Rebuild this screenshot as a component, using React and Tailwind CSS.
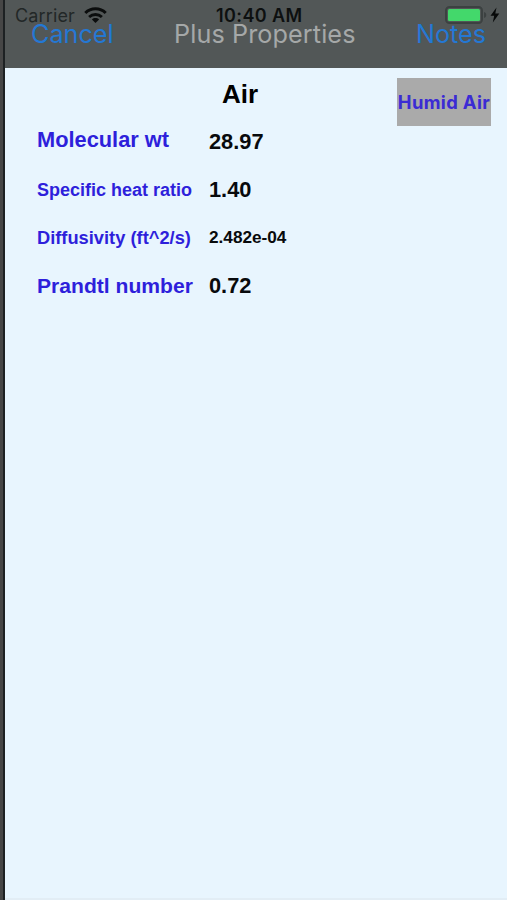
import React from "react";

const rows = [
  {
    label: "Molecular wt",
    value: "28.97",
    rowClass: "h-[50px]",
    labelClass: "text-[21.8px] -mt-[5px]",
    valueClass: "text-[21.8px] -mt-px",
  },
  {
    label: "Specific heat ratio",
    value: "1.40",
    rowClass: "h-[46px]",
    labelClass: "text-[18px] -mt-[2px]",
    valueClass: "text-[21.8px] -mt-px",
  },
  {
    label: "Diffusivity (ft^2/s)",
    value: "2.482e-04",
    rowClass: "h-[48px]",
    labelClass: "text-[18.3px]",
    valueClass: "text-[17.2px]",
  },
  {
    label: "Prandtl number",
    value: "0.72",
    rowClass: "h-[48px]",
    labelClass: "text-[21.1px]",
    valueClass: "text-[21.8px]",
  },
];

function WifiIcon() {
  return (
    <svg width="23" height="17" viewBox="0 0 23 17" fill="none" stroke="#0b0d0d">
      <path d="M1.3 6C7 0.4 16 0.4 21.7 6" strokeWidth="3.1" />
      <path d="M5.1 10C8.8 6.6 14.2 6.6 17.9 10" strokeWidth="2.9" />
      <path d="M11.5 16L7.9 12.4C9.9 10.6 13.1 10.6 15.1 12.4Z" fill="#0b0d0d" stroke="none" />
    </svg>
  );
}

function BatteryIcon() {
  return (
    <svg width="55" height="18" viewBox="0 0 55 18">
      <rect x="1" y="1" width="36" height="16" rx="3.5" fill="#525757" stroke="#3c4141" strokeWidth="2" />
      <rect x="3" y="3" width="32" height="12" rx="1.5" fill="#43d86b" />
      <path d="M39 6C42 6.5 42 11.5 39 12Z" fill="#3c4141" />
      <path d="M51.5 1.5L45.5 9.8H49.2L47.8 16.5L54.3 7.6H50.3Z" fill="#070909" />
    </svg>
  );
}

function StatusBar() {
  return (
    <div className="absolute inset-x-0 top-0 h-[30px] text-[18px] leading-[31px] text-[#0d1010]">
      <div className="absolute left-[10px] top-0 flex items-center gap-[9px] text-[#222727]">
        <span className="w-[60px] whitespace-nowrap tracking-[0.15px]">Carrier</span>
        <WifiIcon />
      </div>
      <div className="absolute left-[211px] top-0 whitespace-nowrap font-semibold tracking-[0.4px]">
        10:40 AM
      </div>
      <div className="absolute left-[440px] top-[6px]">
        <BatteryIcon />
      </div>
    </div>
  );
}

function NavBar() {
  return (
    <header className="relative h-[68px] bg-[#525757] font-['Inter',sans-serif]">
      <div className="flex h-[68px] items-center justify-between pl-[26px] pr-[21px] pt-[2px] text-[25.2px] leading-none">
        <button className="whitespace-nowrap text-[#2478d4]">Cancel</button>
        <span className="whitespace-nowrap tracking-[0.1px] text-[#a5a8a8]">Plus Properties</span>
        <button className="whitespace-nowrap text-[#2478d4]">Notes</button>
      </div>
      <StatusBar />
    </header>
  );
}

export default function App() {
  return (
    <div className="flex h-[900px] w-[507px] overflow-hidden bg-[#e8f5fe] font-['Liberation_Sans',Arial,sans-serif]">
      <div className="h-full w-[5px] shrink-0 border-r-2 border-[#1d2123] bg-[#464646]"></div>

      <div className="flex min-w-0 flex-1 flex-col">
        <NavBar />

        <main className="flex-1 border-b-2 border-[#e2edf5]">
          <div className="grid h-[50px] grid-cols-[217px_1fr_94px] pr-4">
            <div></div>
            <h1 className="pt-[11px] text-[26px] font-bold leading-[30px] text-black">Air</h1>
            <button className="mt-[10px] h-[48px] whitespace-nowrap bg-[#aaaaaa] pt-[2px] font-['Inter',sans-serif] text-[18.4px] font-bold tracking-[0.35px] text-[#3b2bd4]">
              Humid Air
            </button>
          </div>

          <div className="font-bold">
            {rows.map((row) => (
              <div
                key={row.label}
                className={`grid grid-cols-[172px_1fr] items-center pl-8 ${row.rowClass}`}
              >
                <span className={`whitespace-nowrap text-[#2e1fdb] ${row.labelClass}`}>
                  {row.label}
                </span>
                <span className={`whitespace-nowrap text-[#080a0c] ${row.valueClass}`}>
                  {row.value}
                </span>
              </div>
            ))}
          </div>
        </main>
      </div>
    </div>
  );
}
